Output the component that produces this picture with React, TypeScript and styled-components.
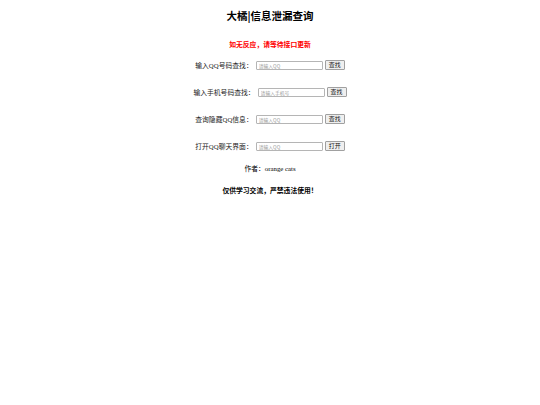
import React from "react";
import styled, { createGlobalStyle } from "styled-components";

const Global = createGlobalStyle`
  html, body { margin: 0; padding: 0; background: #fff; }
  body { font-family: "Liberation Serif", "Noto Sans CJK SC", serif; color: #000; }
`;

const Page = styled.div`
  display: flex;
  flex-direction: column;
  align-items: center;
  padding-top: 9px;
`;

const Title = styled.h2`
  margin: 0;
  font-size: 10.5px;
  line-height: 14px;
  font-weight: bold;
  font-family: "Noto Sans CJK SC", sans-serif;
`;

const Notice = styled.div`
  margin-top: 16px;
  font-size: 6.8px;
  line-height: 10px;
  color: #ff0000;
  font-weight: bold;
  font-family: "Noto Sans CJK SC", sans-serif;
`;

const Row = styled.div`
  display: flex;
  align-items: center;
  height: 10px;
  margin-top: ${(p: { $gap: number }) => p.$gap}px;
`;

const Label = styled.span`
  font-size: 6.8px;
  line-height: 10px;
  padding-top: 1px;
  margin-right: 3px;
  color: #222;
`;

const Input = styled.input`
  box-sizing: border-box;
  width: 67px;
  height: 9px;
  padding: 0 2px;
  border: 1px solid #b5b5b5;
  border-radius: 1px;
  font-size: 4.8px;
  font-family: "Noto Sans CJK SC", sans-serif;
  outline: none;
  &::placeholder { color: #9a9a9a; }
`;

const Button = styled.button`
  box-sizing: border-box;
  margin-left: 2px;
  height: 10px;
  padding: 0 3px;
  border: 1px solid #a0a0a0;
  border-radius: 1px;
  background: #efefef;
  font-size: 6px;
  line-height: 8px;
  font-family: "Noto Sans CJK SC", sans-serif;
  color: #111;
`;

const Author = styled.div`
  margin-top: 13px;
  font-size: 6.8px;
  line-height: 10px;
`;

const Footer = styled.div`
  margin-top: 11px;
  font-size: 6.8px;
  line-height: 10px;
  font-weight: bold;
  font-family: "Noto Sans CJK SC", sans-serif;
`;

const rows = [
  { label: "输入QQ号码查找：", ph: "请输入QQ", btn: "查找", gap: 11 },
  { label: "输入手机号码查找：", ph: "请输入手机号", btn: "查找", gap: 17 },
  { label: "查询隐藏QQ信息：", ph: "请输入QQ", btn: "查找", gap: 17 },
  { label: "打开QQ聊天界面：", ph: "请输入QQ", btn: "打开", gap: 17 },
];

export default function App() {
  return (
    <>
      <Global />
      <Page>
        <Title>大橘|信息泄漏查询</Title>
        <Notice>如无反应，请等待接口更新</Notice>
        {rows.map((r) => (
          <Row key={r.label} $gap={r.gap}>
            <Label>{r.label}</Label>
            <Input placeholder={r.ph} />
            <Button>{r.btn}</Button>
          </Row>
        ))}
        <Author>作者：orange cats</Author>
        <Footer>仅供学习交流，严禁违法使用！</Footer>
      </Page>
    </>
  );
}
